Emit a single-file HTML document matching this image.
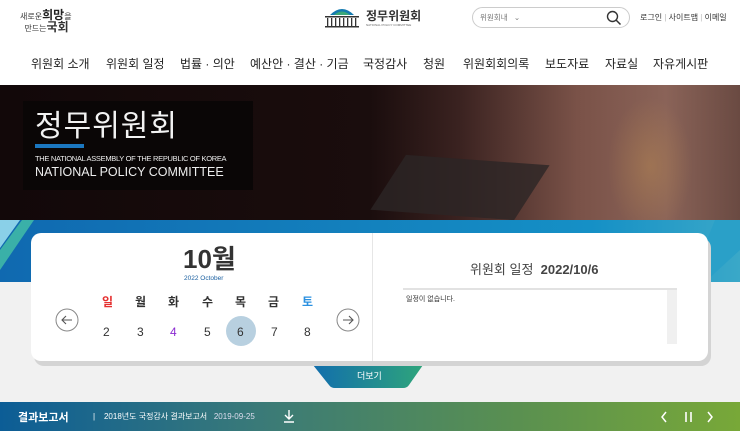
<!DOCTYPE html>
<html><head><meta charset="utf-8"><style>
*{margin:0;padding:0;box-sizing:border-box}
body{width:740px;height:431px;overflow:hidden;background:#f1f1f1;font-family:"Liberation Sans","Noto Sans CJK KR",sans-serif;color:#333;position:relative}
.hdr{position:absolute;left:0;top:0;width:740px;height:85px;background:#fff}
.nav{position:absolute;top:55px;left:0;width:740px;font-size:12px;color:#222}
.nav span{position:absolute;white-space:nowrap}
.hero{position:absolute;top:85px;left:0;width:740px;height:135px;background:linear-gradient(90deg,#120809 0%,#1a0d0d 50%,#3a2220 62%,#7a5248 78%,#8a6358 90%,#6a4a42 100%);overflow:hidden}
.band{position:absolute;top:220px;left:0;width:740px;height:62px;background:linear-gradient(90deg,#1069b0,#1590c6 80%,#3aa8c8)}
.card{position:absolute;left:31px;top:233px;width:677px;height:128px;background:#fff;border-radius:10px;box-shadow:3px 5px 0 #d4d4d4}
.abs{position:absolute}
.bar{position:absolute;top:402px;left:0;width:740px;height:29px;background:linear-gradient(90deg,#0c5d96,#3a7a78 35%,#5a9050 70%,#78a838)}
</style></head><body>
<div class="hdr">
 <div class="abs" style="left:20px;top:10px;font-size:8px;color:#333;line-height:10px">새로운<b style="font-size:12px;color:#222">희망</b>을<br>&nbsp;&nbsp;만드는<b style="font-size:12px">국회</b></div>
 <svg class="abs" style="left:322px;top:4px" width="40" height="24"><path d="M8 11 Q20 -1 32 11Z" fill="#147ab0"/><path d="M12 11 Q20 4 28 11Z" fill="#3aa87a"/><rect x="3" y="12" width="34" height="1.5" fill="#333"/><g fill="#333"><rect x="5" y="14" width="1.3" height="8"/><rect x="9" y="14" width="1.3" height="8"/><rect x="13" y="14" width="1.3" height="8"/><rect x="17" y="14" width="1.3" height="8"/><rect x="21" y="14" width="1.3" height="8"/><rect x="25" y="14" width="1.3" height="8"/><rect x="29" y="14" width="1.3" height="8"/><rect x="33" y="14" width="1.3" height="8"/></g><rect x="3" y="22" width="34" height="1.5" fill="#333"/></svg>
 <div class="abs" style="left:366px;top:7px;font-size:12px;font-weight:bold;color:#333">정무위원회</div>
 <div class="abs" style="left:366px;top:23px;font-size:3px;color:#666">NATIONAL POLICY COMMITTEE</div>
 <div class="abs" style="left:472px;top:7px;width:158px;height:21px;border:1px solid #ccc;border-radius:11px"></div>
 <div class="abs" style="left:480px;top:12px;font-size:7.5px;color:#777">위원회내 &nbsp;&nbsp;⌄</div>
 <svg class="abs" style="left:606px;top:10px" width="16" height="16"><circle cx="6.5" cy="6.5" r="5" fill="none" stroke="#333" stroke-width="1.4"/><path d="M10 10L14.5 14.5" stroke="#333" stroke-width="1.5"/></svg>
 <div class="abs" style="left:640px;top:12px;font-size:8px;color:#333;white-space:nowrap">로그인 <span style="color:#bbb">|</span> 사이트맵 <span style="color:#bbb">|</span> 이메일</div>
 <div class="nav">
  <span style="left:31px">위원회 소개</span><span style="left:106px">위원회 일정</span><span style="left:180px">법률 · 의안</span><span style="left:250px">예산안 · 결산 · 기금</span><span style="left:363px">국정감사</span><span style="left:423px">청원</span><span style="left:463px">위원회회의록</span><span style="left:545px">보도자료</span><span style="left:605px">자료실</span><span style="left:653px">자유게시판</span>
 </div>
</div>
<div class="hero">
 <div class="abs" style="left:385px;top:75px;width:150px;height:55px;background:#2c2626;transform:skewX(-30deg) rotate(4deg);opacity:.8"></div>
 <div class="abs" style="left:600px;top:0;width:100px;height:135px;background:radial-gradient(ellipse at 50% 60%,rgba(200,150,80,.35),transparent 60%)"></div>
 <div class="abs" style="left:23px;top:16px;width:230px;height:89px;background:#0a0606"></div>
 <div class="abs" style="left:35px;top:16px;font-size:30px;color:#f2f2f2;letter-spacing:1px">정무위원회</div>
 <div class="abs" style="left:35px;top:59px;width:49px;height:4px;background:#1b77c0"></div>
 <div class="abs" style="left:35px;top:69px;font-size:7.5px;color:#eee;letter-spacing:-.3px">THE NATIONAL ASSEMBLY OF THE REPUBLIC OF KOREA</div>
 <div class="abs" style="left:35px;top:80px;font-size:12.5px;color:#eee">NATIONAL POLICY COMMITTEE</div>
</div>
<div class="band"></div>
<svg class="abs" style="left:0;top:220px" width="740" height="62"><path d="M0 30 L22 0 L34 0 L0 50Z" fill="#3ab0a8"/><path d="M0 0 L20 0 L0 28Z" fill="#8ad0e8"/><path d="M715 0 L740 0 L740 30 L705 62 L690 62Z" fill="#2aa0c8"/></svg>
<svg class="abs" style="left:305px;top:355px" width="130" height="34"><defs><linearGradient id="g" x1="0" x2="1"><stop offset="0" stop-color="#106ab0"/><stop offset="1" stop-color="#30a878"/></linearGradient></defs><path d="M0 0 L125 0 L104 30 Q102 33 98 33 L30 33 Q26 33 24 30Z" fill="url(#g)"/></svg>
<div class="abs" style="left:357px;top:369px;font-size:9px;color:#fff">더보기</div>
<div class="card">
 <div class="abs" style="left:341px;top:0;width:1px;height:128px;background:#e6e6e6"></div>
 <div class="abs" style="left:152px;top:6px;font-size:26px;font-weight:bold;color:#333">10월</div>
 <div class="abs" style="left:153px;top:42px;font-size:6.5px;color:#1a5fa0">2022 October</div>
 <div class="abs" style="left:0;top:60px;width:341px;font-size:12px;font-weight:bold">
  <span class="abs" style="left:71px;color:#e53030">일</span><span class="abs" style="left:104px">월</span><span class="abs" style="left:137px">화</span><span class="abs" style="left:171px">수</span><span class="abs" style="left:204px">목</span><span class="abs" style="left:237px">금</span><span class="abs" style="left:271px;color:#2a90e0">토</span>
 </div>
 <div class="abs" style="left:195px;top:83px;width:30px;height:30px;border-radius:50%;background:#b8d0e0"></div>
 <div class="abs" style="left:0;top:92px;font-size:12px;color:#333">
  <span class="abs" style="left:72px">2</span><span class="abs" style="left:106px">3</span><span class="abs" style="left:139px;color:#8a2ad0">4</span><span class="abs" style="left:173px">5</span><span class="abs" style="left:206px">6</span><span class="abs" style="left:240px">7</span><span class="abs" style="left:273px">8</span>
 </div>
 <svg class="abs" style="left:24px;top:75px" width="24" height="24"><circle cx="12" cy="12" r="11" fill="#fff" stroke="#888"/><path d="M17 12H7M11 8L7 12L11 16" fill="none" stroke="#555" stroke-width="1.1"/></svg>
 <svg class="abs" style="left:305px;top:75px" width="24" height="24"><circle cx="12" cy="12" r="11" fill="#fff" stroke="#888"/><path d="M7 12H17M13 8L17 12L13 16" fill="none" stroke="#555" stroke-width="1.1"/></svg>
 <div class="abs" style="left:439px;top:26px;font-size:13px;color:#444;white-space:nowrap">위원회 일정 &nbsp;<b>2022/10/6</b></div>
 <div class="abs" style="left:372px;top:55px;width:274px;height:56px;border-top:2px solid #e2e2e2"></div>
 <div class="abs" style="left:636px;top:57px;width:10px;height:54px;background:#f0f0f0"></div>
 <div class="abs" style="left:375px;top:61px;font-size:7px;color:#333">일정이 없습니다.</div>
</div>
<div class="bar">
 <div class="abs" style="left:18px;top:7px;font-size:11px;font-weight:bold;color:#fff">결과보고서</div>
 <div class="abs" style="left:93px;top:9px;font-size:8px;color:#fff;white-space:nowrap">| &nbsp;&nbsp;&nbsp;2018년도 국정감사 결과보고서 &nbsp;&nbsp;<span style="color:#dde">2019-09-25</span></div>
 <svg class="abs" style="left:282px;top:7px" width="14" height="14"><path d="M7 1V10M3 6L7 10L11 6M2 13H12" fill="none" stroke="#fff" stroke-width="1.4"/></svg>
 <svg class="abs" style="left:658px;top:8px" width="64" height="14"><path d="M8 2L4 7L8 12" fill="none" stroke="#fff" stroke-width="1.5"/><path d="M28 2V12M33 2V12" stroke="#fff" stroke-width="1.6"/><path d="M50 2L54 7L50 12" fill="none" stroke="#fff" stroke-width="1.5"/></svg>
</div>
</body></html>
